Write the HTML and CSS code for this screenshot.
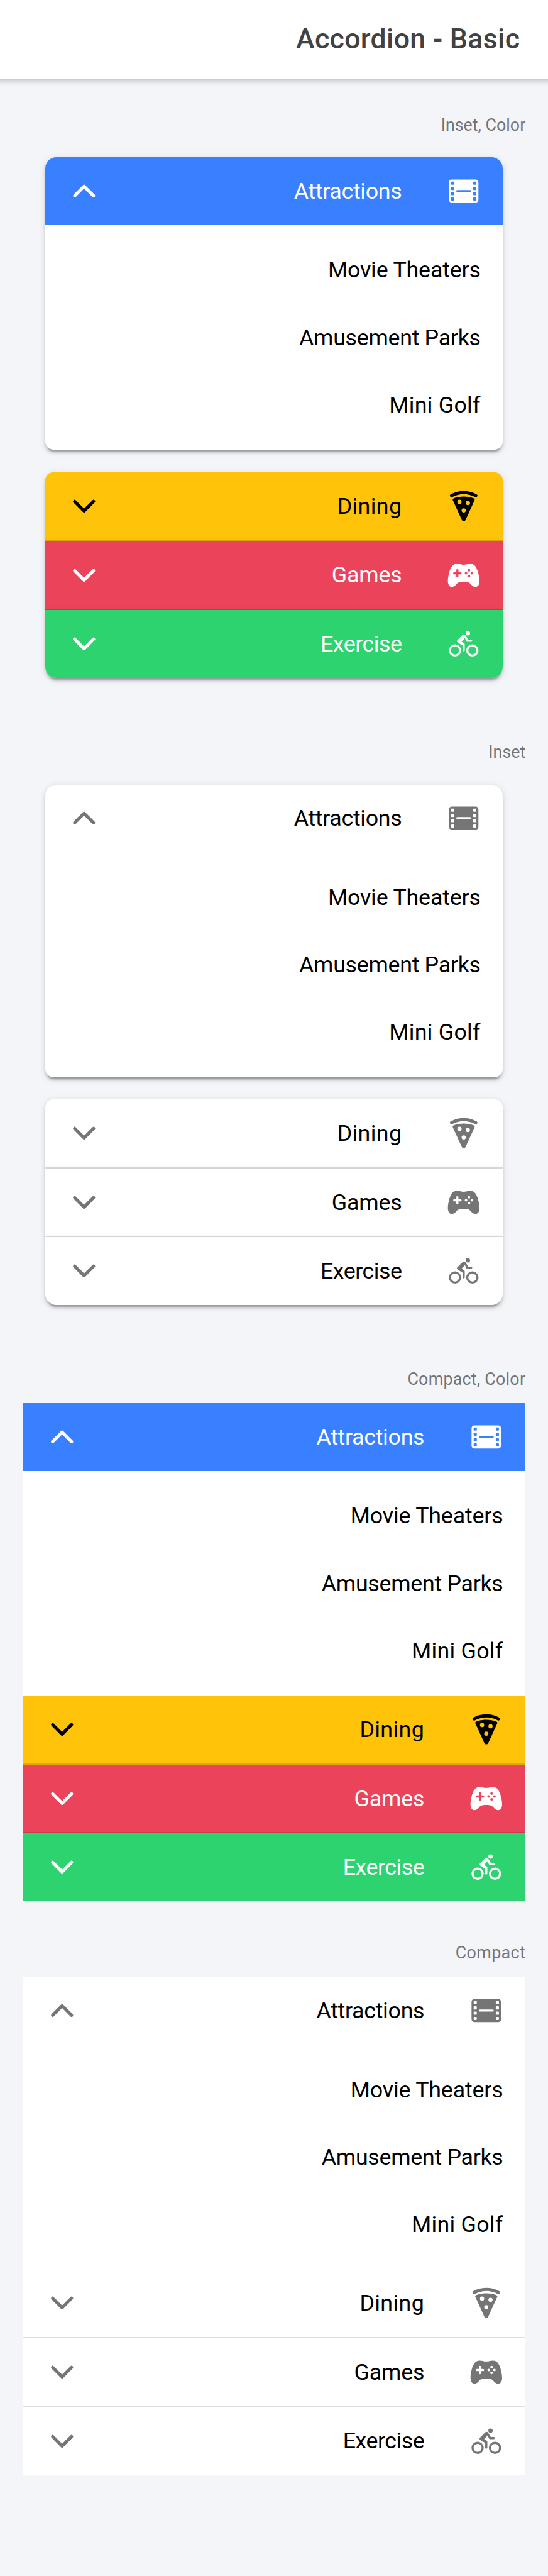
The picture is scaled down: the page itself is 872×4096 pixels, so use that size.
FILE: index.html
```html
<!DOCTYPE html>
<html lang="en" dir="rtl">
<head>
<meta charset="utf-8">
<title>Accordion - Basic</title>
<link rel="stylesheet" href="styles.css">
</head>
<body>
<svg class="sprite" aria-hidden="true">
  <symbol id="chevron" viewBox="0 0 512 512"><path d="M112 184l144 144 144-144" fill="none" stroke="currentColor" stroke-width="48" stroke-linecap="round" stroke-linejoin="round"/></symbol>
  <symbol id="film" viewBox="0 0 512 512"><path fill="currentColor" fill-rule="evenodd" d="M436 80H76a44 44 0 00-44 44v264a44 44 0 0044 44h360a44 44 0 0044-44V124a44 44 0 00-44-44zM112 388a12 12 0 01-12 12H76a12 12 0 01-12-12v-24a12 12 0 0112-12h24a12 12 0 0112 12zm0-80a12 12 0 01-12 12H76a12 12 0 01-12-12v-24a12 12 0 0112-12h24a12 12 0 0112 12zm0-80a12 12 0 01-12 12H76a12 12 0 01-12-12v-24a12 12 0 0112-12h24a12 12 0 0112 12zm0-80a12 12 0 01-12 12H76a12 12 0 01-12-12v-24a12 12 0 0112-12h24a12 12 0 0112 12zm241.600 124H158.400a16 16 0 010-32h195.200a16 16 0 010 32zM448 388a12 12 0 01-12 12h-24a12 12 0 01-12-12v-24a12 12 0 0112-12h24a12 12 0 0112 12zm0-80a12 12 0 01-12 12h-24a12 12 0 01-12-12v-24a12 12 0 0112-12h24a12 12 0 0112 12zm0-80a12 12 0 01-12 12h-24a12 12 0 01-12-12v-24a12 12 0 0112-12h24a12 12 0 0112 12zm0-80a12 12 0 01-12 12h-24a12 12 0 01-12-12v-24a12 12 0 0112-12h24a12 12 0 0112 12z"/></symbol>
  <symbol id="pizza" viewBox="0 0 512 512"><path d="M71 97Q158 50 256 50T441 97" fill="none" stroke="currentColor" stroke-width="48" stroke-linecap="round"/><path fill="currentColor" fill-rule="evenodd" d="M106 135C198 100 314 100 406 135Q430 145 423 163L285 465Q276 483 256 483T227 465L89 163Q82 145 106 135zM192 158a32 32 0 100 64 32 32 0 000-64zm128 18a32 32 0 100 64 32 32 0 000-64zm-64 112a32 32 0 100 64 32 32 0 000-64z"/></symbol>
  <symbol id="controller" viewBox="0 0 512 512"><path fill="currentColor" d="M483.130,245.380C461.920,149.490,430,98.310,382.650,84.330A107.130,107.130,0,0,0,352,80c-13.710,0-25.650,3.340-38.280,6.880C298.500,91.150,281.210,96,256,96s-42.510-4.840-57.760-9.110C185.600,83.340,173.670,80,160,80a115.740,115.740,0,0,0-31.730,4.320c-47.100,13.920-79,65.080-100.520,161C4.610,348.540,16,413.710,59.690,428.830a56.620,56.620,0,0,0,18.640,3.220c29.930,0,53.930-24.930,70.330-45.340,18.530-23.100,40.220-34.820,107.340-34.820,59.950,0,84.760,8.130,106.190,34.820,13.470,16.780,26.200,28.520,38.900,35.910,16.890,9.820,33.770,12,50.160,6.370,25.820-8.810,40.620-32.100,44-69.240C497.800,331.330,494.270,296,483.130,245.380ZM208,240H176v32a16,16,0,0,1-32,0V240H112a16,16,0,0,1,0-32h32V176a16,16,0,0,1,32,0v32h32a16,16,0,0,1,0,32Zm84,4a20,20,0,1,1,20-20A20,20,0,0,1,292,244Zm44,44a20,20,0,1,1,20-20A20,20,0,0,1,336,288Zm0-88a20,20,0,1,1,20-20A20,20,0,0,1,336,200Zm44,44a20,20,0,1,1,20-20A20,20,0,0,1,380,244Z"/></symbol>
  <symbol id="bicycle" viewBox="0 0 512 512"><g fill="none" stroke="currentColor" stroke-width="32"><circle cx="124" cy="356" r="77"/><circle cx="388" cy="356" r="77"/></g><circle cx="320" cy="95" r="33" fill="currentColor"/><path fill="currentColor" d="M242 119L159 202Q144 222 166 236L239 282V354A16.500 16.500 0 00272 354V264Q272 253 264 248L223 221 275 168 297 215Q302 225 313 225H370A16.500 16.500 0 00370 192H323L288 132Q270 98 242 119z"/></symbol>
</svg>

<header class="toolbar"><h1 class="toolbar-title">Accordion - Basic</h1></header>

<main class="content">
  <section class="section inset color">
    <h2 class="section-label">Inset, Color</h2>
    <div class="accordion expanded">
      <div class="item head primary"><svg class="icon"><use href="#film"/></svg><span class="label tight">Attractions</span><svg class="icon chevron"><use href="#chevron"/></svg></div>
      <div class="panel"><div class="item snug">Movie Theaters</div><div class="item tight">Amusement Parks</div><div class="item wide">Mini Golf</div></div>
    </div>
    <div class="accordion first divided"><div class="item head warning"><svg class="icon"><use href="#pizza"/></svg><span class="label wider">Dining</span><svg class="icon chevron"><use href="#chevron"/></svg></div></div>
    <div class="accordion divided danger"><div class="item head danger"><svg class="icon"><use href="#controller"/></svg><span class="label snug">Games</span><svg class="icon chevron"><use href="#chevron"/></svg></div></div>
    <div class="accordion last"><div class="item head success"><svg class="icon"><use href="#bicycle"/></svg><span class="label tighter">Exercise</span><svg class="icon chevron"><use href="#chevron"/></svg></div></div>
  </section>

  <section class="section inset">
    <h2 class="section-label">Inset</h2>
    <div class="accordion expanded">
      <div class="item head"><svg class="icon"><use href="#film"/></svg><span class="label tight">Attractions</span><svg class="icon chevron"><use href="#chevron"/></svg></div>
      <div class="panel"><div class="item snug">Movie Theaters</div><div class="item tight">Amusement Parks</div><div class="item wide">Mini Golf</div></div>
    </div>
    <div class="accordion first divided"><div class="item head"><svg class="icon"><use href="#pizza"/></svg><span class="label wider">Dining</span><svg class="icon chevron"><use href="#chevron"/></svg></div></div>
    <div class="accordion divided"><div class="item head"><svg class="icon"><use href="#controller"/></svg><span class="label snug">Games</span><svg class="icon chevron"><use href="#chevron"/></svg></div></div>
    <div class="accordion last"><div class="item head"><svg class="icon"><use href="#bicycle"/></svg><span class="label tighter">Exercise</span><svg class="icon chevron"><use href="#chevron"/></svg></div></div>
  </section>

  <section class="section compact color">
    <h2 class="section-label wide">Compact, Color</h2>
    <div class="accordion expanded">
      <div class="item head primary"><svg class="icon"><use href="#film"/></svg><span class="label tight">Attractions</span><svg class="icon chevron"><use href="#chevron"/></svg></div>
      <div class="panel"><div class="item snug">Movie Theaters</div><div class="item tight">Amusement Parks</div><div class="item wide">Mini Golf</div></div>
    </div>
    <div class="accordion divided"><div class="item head warning"><svg class="icon"><use href="#pizza"/></svg><span class="label wider">Dining</span><svg class="icon chevron"><use href="#chevron"/></svg></div></div>
    <div class="accordion divided danger"><div class="item head danger"><svg class="icon"><use href="#controller"/></svg><span class="label snug">Games</span><svg class="icon chevron"><use href="#chevron"/></svg></div></div>
    <div class="accordion"><div class="item head success"><svg class="icon"><use href="#bicycle"/></svg><span class="label tighter">Exercise</span><svg class="icon chevron"><use href="#chevron"/></svg></div></div>
  </section>

  <section class="section compact">
    <h2 class="section-label wider">Compact</h2>
    <div class="accordion expanded">
      <div class="item head"><svg class="icon"><use href="#film"/></svg><span class="label tight">Attractions</span><svg class="icon chevron"><use href="#chevron"/></svg></div>
      <div class="panel"><div class="item snug">Movie Theaters</div><div class="item tight">Amusement Parks</div><div class="item wide">Mini Golf</div></div>
    </div>
    <div class="accordion divided"><div class="item head"><svg class="icon"><use href="#pizza"/></svg><span class="label wider">Dining</span><svg class="icon chevron"><use href="#chevron"/></svg></div></div>
    <div class="accordion divided"><div class="item head"><svg class="icon"><use href="#controller"/></svg><span class="label snug">Games</span><svg class="icon chevron"><use href="#chevron"/></svg></div></div>
    <div class="accordion"><div class="item head"><svg class="icon"><use href="#bicycle"/></svg><span class="label tighter">Exercise</span><svg class="icon chevron"><use href="#chevron"/></svg></div></div>
  </section>
</main>
</body>
</html>
```

FILE: styles.css
```css
/* 0.1rem is one design pixel of a 390-wide layout */
html {
  font-size: 22.359px;
}

* {
  box-sizing: border-box;
}

body {
  margin: 0;
  background: #f4f5f9;
  color: #000;
  font-family: Roboto, sans-serif;
  font-size: 1.6rem;
}

.sprite {
  position: absolute;
  width: 0;
  height: 0;
}

.toolbar {
  position: relative;
  display: flex;
  align-items: center;
  height: 5.6rem;
  padding: 0.05rem 2rem 0;
  background: #fff;
}

.toolbar::after {
  content: "";
  position: absolute;
  top: 100%;
  left: 0;
  right: 0;
  height: 0.5rem;
  background: linear-gradient(rgba(0, 0, 0, 0.2), rgba(0, 0, 0, 0.12) 30%, rgba(0, 0, 0, 0.04) 70%, rgba(0, 0, 0, 0.01));
}

.toolbar-title {
  margin: 0;
  color: #424242;
  font-size: 2rem;
  font-weight: 500;
  letter-spacing: 0.013rem;
  line-height: 1.2;
}

.content {
  height: 177.59rem;
  padding: 0 1.6rem;
}

.section-label {
  display: flex;
  align-items: center;
  height: 2rem;
  margin: 0;
  color: #737478;
  font-size: 1.2rem;
  font-weight: 400;
}

/* Section rhythm */
.inset {
  height: 44.6rem;
  padding: 2.28rem 1.6rem 0;
}

.inset .section-label {
  margin: 0 -1.6rem 1.32rem;
}

.compact {
  height: 40.8rem;
  padding-top: 2.28rem;
}

.compact .section-label {
  margin-bottom: 0.72rem;
}

.accordion {
  position: relative;
  overflow: hidden;
  background: #fff;
}

.inset .accordion {
  box-shadow: 0 0.3rem 0.1rem -0.2rem rgba(0, 0, 0, 0.2), 0 0.2rem 0.2rem 0 rgba(0, 0, 0, 0.14), 0 0.1rem 0.5rem 0 rgba(0, 0, 0, 0.12);
}

.inset .expanded {
  margin-bottom: 1.6rem;
  border-radius: 0.8rem 0.8rem 0.6rem 0.6rem;
}

.inset .first {
  border-radius: 0.6rem 0.6rem 0 0;
}

.inset .last {
  border-radius: 0 0 0.8rem 0.8rem;
}

.divided::after {
  content: "";
  display: block;
  height: 0.1rem;
  background: rgba(0, 0, 0, 0.13);
}

.color .divided {
  background: #ffc409;
}

.color .divided.danger {
  background: #eb445a;
}

.panel {
  padding: 0.8rem 0;
}

.item {
  display: flex;
  align-items: center;
  height: 4.8rem;
  padding: 0 1.6rem;
  line-height: 1.2;
}

.panel .item,
.label {
  padding-top: 0.05rem;
}

.icon {
  flex: none;
  width: 2.4rem;
  height: 2.4rem;
  color: #757575;
}

.label {
  flex: 1;
  margin-right: 3.2rem;
}

.expanded .chevron {
  transform: rotate(180deg);
}

/* Tracking */
.snug {
  letter-spacing: -0.008rem;
}

.tight {
  letter-spacing: -0.013rem;
}

.tighter {
  letter-spacing: -0.021rem;
}

.wide {
  letter-spacing: 0.011rem;
}

.wider {
  letter-spacing: 0.018rem;
}

.primary,
.danger,
.success {
  color: #fff;
}

.primary {
  background: #3880ff;
}

.warning {
  background: #ffc409;
}

.danger {
  background: #eb445a;
}

.success {
  background: #2dd36f;
}

.color .head .icon {
  color: inherit;
}
```
